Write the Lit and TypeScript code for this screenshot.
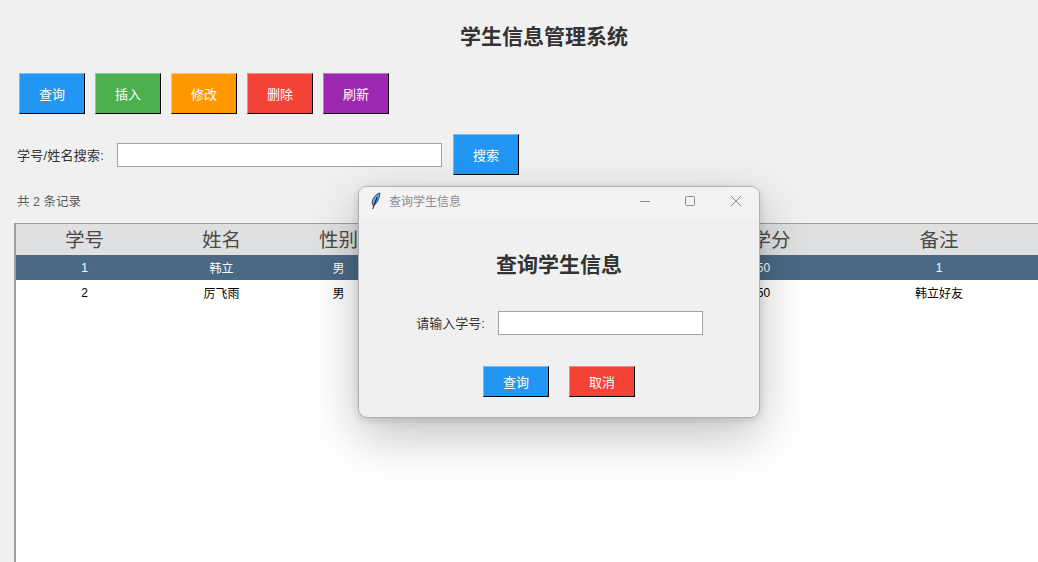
import { LitElement, html, css } from "lit";
import { customElement } from "lit/decorators.js";

@customElement("app-root")
export class AppRoot extends LitElement {
  static styles = css`
    :host {
      display: block;
      position: relative;
      width: 1038px;
      height: 562px;
      overflow: hidden;
      background: #f0f0f0;
      font-family: "Liberation Sans", "Noto Sans CJK SC", sans-serif;
      color: #333;
    }
    .page {
      display: flex;
      flex-direction: column;
      height: 562px;
      box-sizing: border-box;
    }
    h1 {
      margin: 0;
      height: 73px;
      padding: 22px 0 0 50px;
      box-sizing: border-box;
      font-size: 21px;
      line-height: 30px;
      font-weight: 700;
      text-align: center;
      color: #333;
    }
    .toolbar {
      display: flex;
      gap: 10px;
      padding-left: 19px;
      height: 41px;
    }
    .btn {
      width: 66px;
      height: 41px;
      box-sizing: border-box;
      display: flex;
      align-items: center;
      justify-content: center;
      color: #fff;
      font-size: 13px;
      padding-bottom: 1px;
      border: 1px solid;
      border-right-color: #000;
      border-bottom-color: #000;
    }
    .small { height: 31px; }
    .blue { background: #2196f3; border-top-color: #6fbcf8; border-left-color: #6fbcf8; }
    .green { background: #4caf50; border-top-color: #8dcd90; border-left-color: #8dcd90; }
    .orange { background: #ff9800; border-top-color: #ffc266; border-left-color: #ffc266; }
    .red { background: #f44336; border-top-color: #f88a82; border-left-color: #f88a82; }
    .purple { background: #9c27b0; border-top-color: #c676d3; border-left-color: #c676d3; }
    .search {
      display: flex;
      align-items: center;
      margin-top: 20px;
      height: 41px;
      padding-left: 17px;
      font-size: 13px;
    }
    .search label { width: 100px; white-space: nowrap; letter-spacing: 0.25px; padding-bottom: 1px; }
    .input {
      box-sizing: border-box;
      height: 24px;
      background: #fff;
      border: 1px solid #a5a5a5;
    }
    .search .input { width: 325px; margin-right: 11px; }
    .count {
      margin: 17px 0 0 17px;
      height: 20px;
      line-height: 20px;
      font-size: 12.5px;
      color: #5a5a5a;
    }
    .table {
      margin: 11px 0 0 14px;
      flex: 1;
      width: 1060px;
      box-sizing: border-box;
      background: #fff;
      border-left: 2px solid #a0a096;
      border-top: 1px solid #a0a096;
    }
    .row {
      display: grid;
      grid-template-columns: 137px 137px 97px 334px 100px 236px;
      align-items: center;
      justify-items: center;
      height: 25px;
      font-size: 12px;
      color: #000;
    }
    .row > span { white-space: nowrap; }
    .row > span.credit { padding-right: 15px; }
    .head {
      height: 31px;
      padding-bottom: 2px;
      box-sizing: border-box;
      background: #e0e0e0;
      font-family: "Noto Sans CJK SC", sans-serif;
      font-size: 19.5px;
      color: #4a4a4a;
    }
    .sel { background: #4a6984; color: #fff; }
    .dialog {
      position: absolute;
      left: 358px;
      top: 186px;
      width: 402px;
      height: 232px;
      box-sizing: border-box;
      background: #f0f0f0;
      border: 1px solid #b0b0b0;
      border-radius: 9px;
      box-shadow: 0 18px 50px rgba(0, 0, 0, 0.24), 0 2px 8px rgba(0, 0, 0, 0.14);
      display: flex;
      flex-direction: column;
      overflow: hidden;
    }
    .titlebar {
      display: flex;
      align-items: center;
      height: 31px;
      flex: none;
      box-sizing: border-box;
      background: #f3f3f3;
      padding: 0 1px 4px 11px;
      font-size: 12px;
      color: #8c8c8c;
    }
    .feather { width: 11px; height: 18px; flex: none; margin-right: 8px; }
    .ttl { flex: 1; }
    .wc { width: 45px; height: 27px; flex: none; display: flex; align-items: center; justify-content: center; }
    .wc.mid { margin-right: 1px; }
    .wc svg { width: 12px; height: 12px; display: block; }
    .dbody { display: flex; flex-direction: column; align-items: center; flex: 1; }
    h2 {
      margin: 32px 0 0;
      font-size: 21px;
      line-height: 30px;
      font-weight: 700;
      color: #333;
    }
    .qrow {
      display: flex;
      align-items: center;
      margin-top: 31px;
      font-size: 13px;
      padding-left: 1px;
    }
    .qrow label { margin-right: 13px; white-space: nowrap; padding-bottom: 1px; }
    .qrow .input { width: 205px; }
    .actions { display: flex; gap: 20px; margin-top: 31px; }
  `;

  private cols(vals: string[], cls = "") {
    return html`<div class="row ${cls}">
      ${vals.map((v, i) => html`<span class="${i === 4 && cls !== "head" ? "credit" : ""}">${v}</span>`)}
    </div>`;
  }

  render() {
    return html`
      <div class="page">
        <h1>学生信息管理系统</h1>
        <div class="toolbar">
          <div class="btn blue">查询</div>
          <div class="btn green">插入</div>
          <div class="btn orange">修改</div>
          <div class="btn red">删除</div>
          <div class="btn purple">刷新</div>
        </div>
        <div class="search">
          <label>学号/姓名搜索:</label>
          <div class="input"></div>
          <div class="btn blue">搜索</div>
        </div>
        <div class="count">共 2 条记录</div>
        <div class="table">
          ${this.cols(["学号", "姓名", "性别", "", "学分", "备注"], "head")}
          ${this.cols(["1", "韩立", "男", "", "50", "1"], "sel")}
          ${this.cols(["2", "厉飞雨", "男", "", "50", "韩立好友"])}
        </div>
      </div>
      <div class="dialog">
        <div class="titlebar">
          <svg class="feather" viewBox="0 0 11 18">
            <path d="M9.8 1C7 1.6 3.4 4.6 2.4 9.4c-.3 1.8 0 3.2.7 4C6.6 12.4 9.4 7 9.8 1Z" fill="#63a8f2" stroke="#14233c" stroke-width="0.8"/>
            <path d="M7.2 5 2.7 17" stroke="#000" stroke-width="0.9" fill="none"/>
          </svg>
          <span class="ttl">查询学生信息</span>
          <div class="wc"><svg viewBox="0 0 12 12"><path d="M1 6.5h10" stroke="#8a8a8a" fill="none"/></svg></div>
          <div class="wc mid"><svg viewBox="0 0 12 12"><rect x="1.5" y="1.5" width="9" height="9" rx="1" stroke="#8a8a8a" fill="none"/></svg></div>
          <div class="wc"><svg viewBox="0 0 12 12"><path d="M.8.8l10.4 10.4M11.2.8L.8 11.2" stroke="#8a8a8a" fill="none"/></svg></div>
        </div>
        <div class="dbody">
          <h2>查询学生信息</h2>
          <div class="qrow">
            <label>请输入学号:</label>
            <div class="input"></div>
          </div>
          <div class="actions">
            <div class="btn small blue">查询</div>
            <div class="btn small red">取消</div>
          </div>
        </div>
      </div>
    `;
  }
}
